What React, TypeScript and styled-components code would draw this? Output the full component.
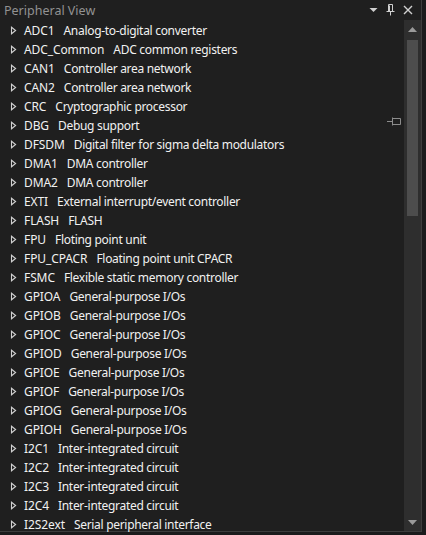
import React from "react";
import styled, {createGlobalStyle} from "styled-components";

const GlobalStyle = createGlobalStyle`
    html, body {
        margin: 0;
        padding: 0;
        background: #1b1b1c;
    }
    body {
        font-family: "Noto Sans", "Open Sans", sans-serif;
    }
`;

const peripherals: [string, string][] = [
    ["ADC1", "Analog-to-digital converter"],
    ["ADC_Common", "ADC common registers"],
    ["CAN1", "Controller area network"],
    ["CAN2", "Controller area network"],
    ["CRC", "Cryptographic processor"],
    ["DBG", "Debug support"],
    ["DFSDM", "Digital filter for sigma delta modulators"],
    ["DMA1", "DMA controller"],
    ["DMA2", "DMA controller"],
    ["EXTI", "External interrupt/event controller"],
    ["FLASH", "FLASH"],
    ["FPU", "Floting point unit"],
    ["FPU_CPACR", "Floating point unit CPACR"],
    ["FSMC", "Flexible static memory controller"],
    ["GPIOA", "General-purpose I/Os"],
    ["GPIOB", "General-purpose I/Os"],
    ["GPIOC", "General-purpose I/Os"],
    ["GPIOD", "General-purpose I/Os"],
    ["GPIOE", "General-purpose I/Os"],
    ["GPIOF", "General-purpose I/Os"],
    ["GPIOG", "General-purpose I/Os"],
    ["GPIOH", "General-purpose I/Os"],
    ["I2C1", "Inter-integrated circuit"],
    ["I2C2", "Inter-integrated circuit"],
    ["I2C3", "Inter-integrated circuit"],
    ["I2C4", "Inter-integrated circuit"],
    ["I2S2ext", "Serial peripheral interface"],
];

const StyledPanel = styled.div`
    width: 422px;
    height: 532px;
    background: #1f1f1f;
    border-right: 1px solid #3d3d3d;
    border-bottom: 1px solid #3d3d3d;
    box-sizing: border-box;
    display: flex;
    flex-direction: column;
`;

const StyledTitleBar = styled.header`
    height: 20px;
    display: flex;
    align-items: center;
    padding-left: 4px;
    padding-right: 8px;
    color: #929292;
    font-size: 12.5px;
`;

const StyledTitle = styled.span`
    flex: 1;
`;

const StyledTitleIcons = styled.div`
    display: flex;
    align-items: center;
    gap: 8px;
`;

const StyledBody = styled.div`
    flex: 1;
    display: flex;
    min-height: 0;
`;

const StyledList = styled.ul`
    flex: 1;
    list-style: none;
    margin: 0;
    padding: 1px 0 0;
    position: relative;
`;

const StyledRow = styled.li`
    height: 19px;
    display: flex;
    align-items: center;
    padding-left: 10px;
    white-space: nowrap;
    color: #f1f1f1;
    font-size: 12px;
    line-height: 16px;
`;

const StyledName = styled.span`
    margin-left: 7px;
    letter-spacing: -0.1px;
`;

const StyledDescription = styled.span`
    margin-left: 9px;
    letter-spacing: -0.3px;
`;

const StyledFloatingPin = styled.div`
    position: absolute;
    top: 97px;
    right: 2px;
    display: flex;
`;

const StyledScrollbar = styled.div`
    width: 17px;
    background: #2e2e2e;
    display: flex;
    flex-direction: column;
    align-items: center;
`;

const StyledArrow = styled.div`
    height: 18px;
    display: flex;
    align-items: center;
    justify-content: center;
`;

const StyledTrack = styled.div`
    flex: 1;
    width: 100%;
    display: flex;
    justify-content: center;
`;

const StyledThumb = styled.div`
    width: 11px;
    height: 176px;
    margin-top: 2px;
    background: #4d4d4d;
`;

function Expander() {
    return (
        <svg width="7" height="9" viewBox="0 0 7 9">
            <path d="M1.5 1.2 L5.6 4.5 L1.5 7.8 Z" fill="none" stroke="#d0d0d0" strokeWidth="1.1"/>
        </svg>
    );
}

export default function App() {
    return (
        <>
            <GlobalStyle/>
            <StyledPanel>
                <StyledTitleBar>
                    <StyledTitle>Peripheral View</StyledTitle>
                    <StyledTitleIcons>
                        <svg width="9" height="6" viewBox="0 0 9 6">
                            <path d="M0.5 1 L8.5 1 L4.5 5 Z" fill="#d0d0d0"/>
                        </svg>
                        <svg width="9" height="12" viewBox="0 0 9 12">
                            <path d="M2.5 0.5 H6.5 V7.5 H2.5 Z M3.5 1.5 V7 M0.5 7.5 H8.5 M4.5 7.5 V11.5" fill="none" stroke="#d0d0d0" strokeWidth="1"/>
                        </svg>
                        <svg width="10" height="10" viewBox="0 0 10 10">
                            <path d="M1 1 L9 9 M9 1 L1 9" stroke="#d0d0d0" strokeWidth="1.4"/>
                        </svg>
                    </StyledTitleIcons>
                </StyledTitleBar>
                <StyledBody>
                    <StyledList>
                        {peripherals.map(([name, description]) => (
                            <StyledRow key={name}>
                                <Expander/>
                                <StyledName>{name}</StyledName>
                                <StyledDescription>{description}</StyledDescription>
                            </StyledRow>
                        ))}
                        <StyledFloatingPin>
                            <svg width="15" height="9" viewBox="0 0 15 9">
                                <path d="M0 4.5 H5.5 M5.5 0.5 V8.5 M5.5 1.5 H13.5 V7.5 H5.5" fill="none" stroke="#8c8c8c" strokeWidth="1"/>
                            </svg>
                        </StyledFloatingPin>
                    </StyledList>
                    <StyledScrollbar>
                        <StyledArrow>
                            <svg width="9" height="5" viewBox="0 0 9 5">
                                <path d="M0 5 L4.5 0 L9 5 Z" fill="#9a9a9a"/>
                            </svg>
                        </StyledArrow>
                        <StyledTrack>
                            <StyledThumb/>
                        </StyledTrack>
                        <StyledArrow>
                            <svg width="9" height="5" viewBox="0 0 9 5">
                                <path d="M0 0 L9 0 L4.5 5 Z" fill="#9a9a9a"/>
                            </svg>
                        </StyledArrow>
                    </StyledScrollbar>
                </StyledBody>
            </StyledPanel>
        </>
    );
}
